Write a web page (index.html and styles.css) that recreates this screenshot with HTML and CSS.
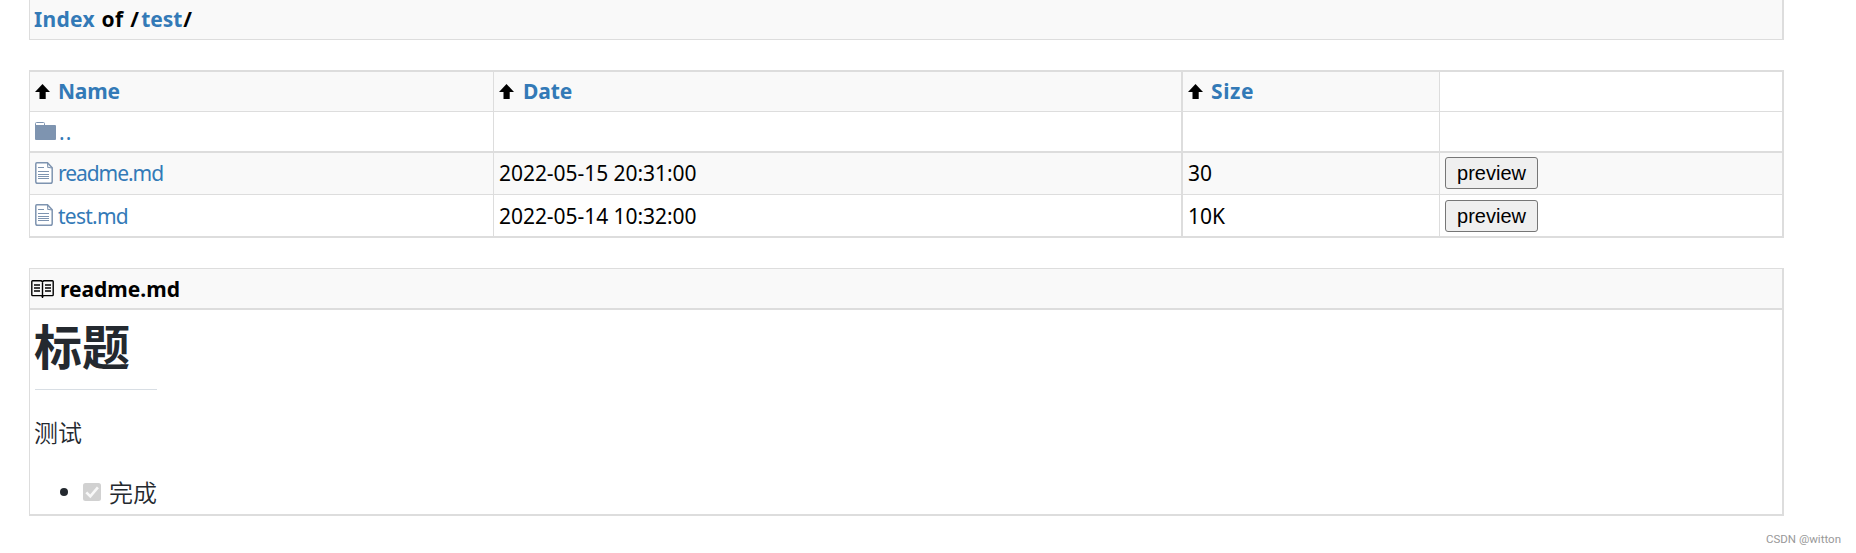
FILE: index.html
```html
<!DOCTYPE html>
<html lang="zh-CN">
<head>
<meta charset="utf-8">
<title>Index of /test/</title>
<link rel="stylesheet" href="styles.css">
</head>
<body>
<svg class="defs" width="0" height="0">
  <symbol id="arrow" viewBox="0 0 15 15"><path d="M7.5 0 15 8h-4.3v7H4.5V8H0z" fill="#000"/></symbol>
  <symbol id="file" viewBox="0 0 18 22"><path d="M1.8.8h10.7l4.7 5v13.6q0 1.8-1.8 1.8H2.6q-1.8 0-1.8-1.8V2Q.8.8 1.8.8z" fill="#fff" stroke="#7e94b0" stroke-width="1.5"/><path d="M12.5 1l.3 4.2L17 6M3 5.5h6M3 9.5h11M3 12.5h11M3 14.5h11M3 16.5h11" fill="none" stroke="#7e94b0" stroke-width="1.1"/></symbol>
</svg>
<header class="crumbs"><h1 class="crumb-text"><a href="#">Index</a> of <span class="slash">/</span><a class="t-test" href="#">test</a>/</h1></header>
<main>
  <section class="files">
    <div class="row head">
      <div class="cell"><svg class="arrow"><use href="#arrow"/></svg><a class="t-name" href="#">Name</a></div>
      <div class="cell"><svg class="arrow"><use href="#arrow"/></svg><a class="t-date" href="#">Date</a></div>
      <div class="cell"><svg class="arrow"><use href="#arrow"/></svg><a class="t-size" href="#">Size</a></div>
      <div class="cell blank"></div>
    </div>
    <div class="row parent">
      <div class="cell"><svg class="folder" viewBox="0 0 21 18"><path d="M.5 4V1.5Q.5.5 1.5.5h7q1 0 1 1V4" fill="#fff" stroke="#7e94b0"/><path d="M0 3h20q1 0 1 1v13q0 1-1 1H1q-1 0-1-1z" fill="#7e94b0"/></svg><a class="t-up" href="#">..</a></div>
      <div class="cell"></div><div class="cell"></div><div class="cell"></div>
    </div>
    <div class="row shaded">
      <div class="cell"><svg class="file"><use href="#file"/></svg><a class="t-file" href="#">readme.md</a></div>
      <div class="cell"><span class="t-num">2022-05-15 20:31:00</span></div>
      <div class="cell"><span class="t-num">30</span></div>
      <div class="cell"><button class="preview">preview</button></div>
    </div>
    <div class="row last">
      <div class="cell"><svg class="file"><use href="#file"/></svg><a class="t-file" href="#">test.md</a></div>
      <div class="cell"><span class="t-num">2022-05-14 10:32:00</span></div>
      <div class="cell"><span class="t-num">10K</span></div>
      <div class="cell"><button class="preview">preview</button></div>
    </div>
  </section>
  <article class="readme">
    <header class="readme-head"><svg class="book" viewBox="0 0 23 18"><path d="M1.6.8h8.6l1.3.8 1.3-.8h8.6q.8 0 .8.8v13.2q0 .8-.8.8h-8.6l-1.3.8-1.3-.8H1.6q-.8 0-.8-.8V1.6q0-.8.8-.8zM11.5 1v17M3 5h6M3 8h6M3 11h6M14 5h6M14 8h6M14 11h6" fill="none" stroke="#000" stroke-width="1.4"/></svg><h2 class="t-readme">readme.md</h2></header>
    <div class="markdown">
      <h1 class="title">标题</h1>
      <p class="para">测试</p>
      <ul class="tasks"><li class="task"><span class="dot"></span><svg class="check" viewBox="0 0 18 18"><rect width="18" height="18" rx="2.5" fill="#d1d1d1"/><path d="m3.3 9.3 4 4 7.6-9" fill="none" stroke="#f8f8f8" stroke-width="2.6"/></svg><span class="t-task">完成</span></li></ul>
    </div>
  </article>
</main>
<footer class="mark">CSDN @witton</footer>
</body>
</html>
```
FILE: styles.css
```css
* { box-sizing: border-box; }
body { margin: 0; height: 553px; overflow: hidden; background: #fff; color: #000; font: 21px/30px "Noto Sans", "Noto Sans CJK SC", sans-serif; }
h1, h2, p, ul { margin: 0; padding: 0; font-size: inherit; }
a { color: #337ab7; text-decoration: none; }
svg { display: block; flex: none; }
.defs { position: absolute; }
.crumbs, .files, .readme { width: 1755px; margin-left: 29px; border: 1px solid #ddd; border-right-width: 2px; }
.crumbs { height: 40px; border-top: 0; background: #f9f9f9; padding: 4px 0 0 4px; }
.crumb-text { letter-spacing: .3px; word-spacing: 1px; white-space: nowrap; }
.slash { margin-right: 2px; }
.t-test { letter-spacing: -.1px; margin-right: 1px; }
.files { margin-top: 30px; border-top-width: 2px; border-bottom-width: 2px; }
.row { display: grid; grid-template-columns: 464px 689px 257px 1fr; border-bottom: 1px solid #ddd; height: 40px; }
.head { background: #f9f9f9; font-weight: 700; }
.parent { height: 41px; border-bottom-width: 2px; }
.shaded { height: 42px; background: #f9f9f9; }
.last { height: 41px; border: 0; }
.cell { display: flex; align-items: center; padding-left: 5px; border-right: 1px solid #ddd; white-space: nowrap; }
.cell:nth-child(2) { border-right-width: 2px; }
.cell:last-child { border-right: 0; }
.shaded .cell { padding-bottom: 1px; }
.last .cell { padding-top: 1px; }
.last .file { margin-bottom: 2px; }
.blank { background: #fff; }
.arrow { width: 15px; height: 15px; margin-right: 8px; }
.head a { padding-bottom: 2px; }
.t-name { letter-spacing: -.2px; }
.t-date { margin-left: 1px; letter-spacing: -.1px; }
.t-size { letter-spacing: .6px; }
.folder { width: 21px; height: 18px; margin: 0 3px 2px 0; }
.t-up { letter-spacing: 1px; }
.file { width: 18px; height: 22px; margin-right: 5px; }
.t-file { letter-spacing: -1.05px; }
.last .t-file { letter-spacing: -.75px; }
.t-num { letter-spacing: -.05px; }
.preview { width: 93px; height: 32px; padding: 0; border: 1px solid #767676; border-radius: 3px; background: #efefef; color: #000; font: 20px "Liberation Sans", sans-serif; }
.readme { height: 248px; margin-top: 30px; border-bottom-width: 2px; }
.readme-head { display: flex; align-items: center; height: 41px; padding-left: 1px; background: #f9f9f9; border-bottom: 2px solid #ddd; }
.book { width: 23px; height: 18px; margin-right: 6px; }
.markdown { width: fit-content; padding: 0 0 0 5px; color: #24292f; font: 24px/36px "Noto Sans CJK SC", sans-serif; }
.title { height: 80px; width: 122px; font-size: 48px; line-height: 68px; text-indent: -1px; border-bottom: 1px solid #d8dee4; }
.para { margin-top: 24px; text-indent: -1px; font-weight: 350; }
.tasks { margin-top: 24px; list-style: none; }
.task { display: flex; align-items: center; padding-left: 25px; }
.t-task { font-weight: 350; }
.dot { width: 8px; height: 8px; border-radius: 50%; background: #24292f; margin-right: 15px; }
.check { width: 18px; height: 18px; margin-right: 8px; }
.mark { margin: 11px 15px 0 0; text-align: right; font: 11.5px/24px Roboto, sans-serif; color: #999; }
```
